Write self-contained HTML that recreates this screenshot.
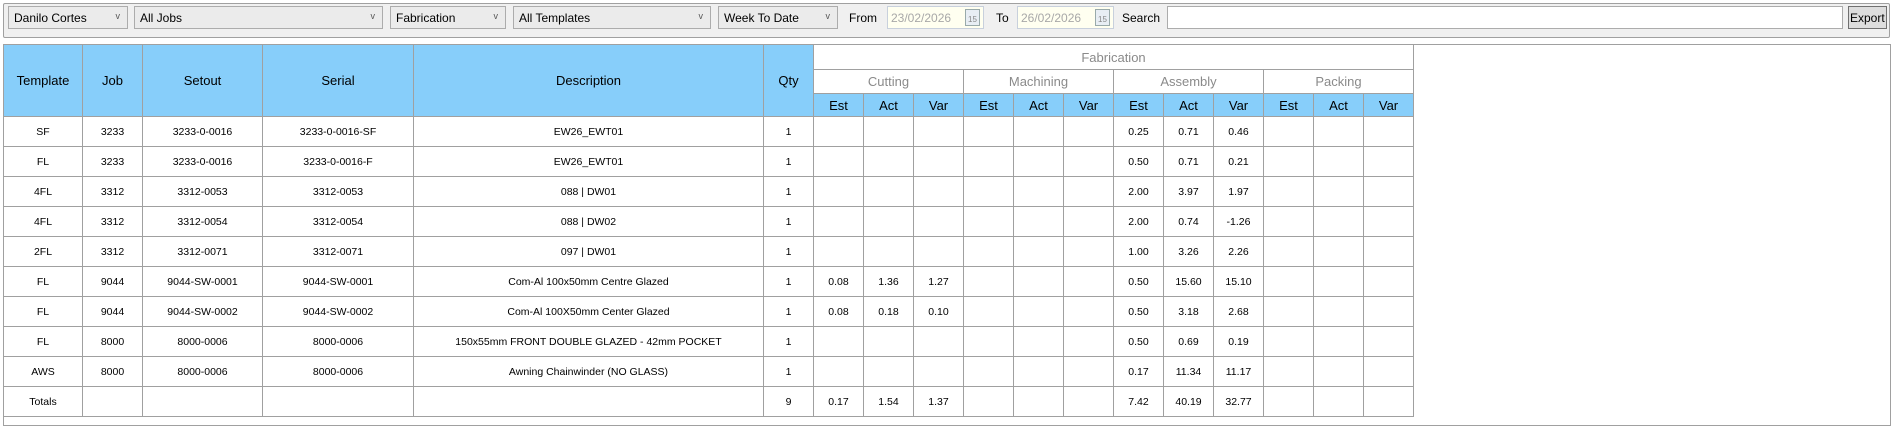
<!DOCTYPE html>
<html><head><meta charset="utf-8"><style>
*{box-sizing:border-box;margin:0;padding:0}
body{width:1892px;height:424px;background:#fff;font-family:"Liberation Sans",sans-serif;font-size:12px;color:#000;position:relative;overflow:hidden}
.tb{position:absolute;left:3px;top:3px;width:1887px;height:35px;background:#f0f0f0;border:1px solid #a0a0a0;border-radius:2px}
.c{position:absolute;top:6px;height:23px;border:1px solid #acacac;background:#ebebeb;padding:4px 5px;font-size:12px}
.c .ar{position:absolute;right:7px;top:4px;font-size:9px;color:#555}
.lb{position:absolute;top:11px;font-size:12px}
.dt{position:absolute;top:6px;height:23px;border:1px solid #c8d0dc;background:#fffff0;color:#a8a8a8;padding:4px 3px;font-size:12px}
.cal{position:absolute;right:3px;top:2px;width:15px;height:17px;border:1px solid #9aa;background:#e8eef4;font-size:8px;color:#888;text-align:center;padding-top:5px}
.frame{position:absolute;left:3px;top:44px;width:1888px;height:382px;border:1px solid #a0a0a0}
table{position:absolute;left:3px;top:44px;border-collapse:collapse;table-layout:fixed}
td{border:1px solid #a0a0a0;text-align:center;font-size:10.5px;overflow:hidden;white-space:nowrap}
.b{background:#87cefa;color:#000}
.g{color:#8a8a8a;font-size:13px}
.h{font-size:13px}
tr.d td{height:30px}
</style></head><body>
<div class="tb"></div>
<div class="c" style="left:8px;width:120px">Danilo Cortes<span class="ar">v</span></div>
<div class="c" style="left:134px;width:249px">All Jobs<span class="ar">v</span></div>
<div class="c" style="left:390px;width:116px">Fabrication<span class="ar">v</span></div>
<div class="c" style="left:513px;width:198px">All Templates<span class="ar">v</span></div>
<div class="c" style="left:718px;width:120px">Week To Date<span class="ar">v</span></div>
<div class="lb" style="left:849px">From</div>
<div class="dt" style="left:887px;width:97px">23/02/2026<div class="cal">15</div></div>
<div class="lb" style="left:996px">To</div>
<div class="dt" style="left:1017px;width:97px">26/02/2026<div class="cal">15</div></div>
<div class="lb" style="left:1122px">Search</div>
<div class="c" style="left:1167px;width:676px;background:#fff"></div>
<div class="c" style="left:1848px;width:39px;padding:4px 1px;background:#dddddd;border-color:#707070">Export</div>
<div class="frame"></div>
<table>
<colgroup><col style="width:79px"><col style="width:60px"><col style="width:120px"><col style="width:151px"><col style="width:350px"><col style="width:50px">
<col style="width:50px"><col style="width:50px"><col style="width:50px"><col style="width:50px"><col style="width:50px"><col style="width:50px"><col style="width:50px"><col style="width:50px"><col style="width:50px"><col style="width:50px"><col style="width:50px"><col style="width:50px"></colgroup>
<tr style="height:25px"><td rowspan="3" class="b h">Template</td><td rowspan="3" class="b h">Job</td><td rowspan="3" class="b h">Setout</td><td rowspan="3" class="b h">Serial</td><td rowspan="3" class="b h">Description</td><td rowspan="3" class="b h">Qty</td><td colspan="12" class="g">Fabrication</td></tr>
<tr style="height:24px"><td colspan="3" class="g">Cutting</td><td colspan="3" class="g">Machining</td><td colspan="3" class="g">Assembly</td><td colspan="3" class="g">Packing</td></tr>
<tr style="height:23px"><td class="b h">Est</td><td class="b h">Act</td><td class="b h">Var</td><td class="b h">Est</td><td class="b h">Act</td><td class="b h">Var</td><td class="b h">Est</td><td class="b h">Act</td><td class="b h">Var</td><td class="b h">Est</td><td class="b h">Act</td><td class="b h">Var</td></tr>
<tr class="d"><td>SF</td><td>3233</td><td>3233-0-0016</td><td>3233-0-0016-SF</td><td>EW26_EWT01</td><td>1</td><td></td><td></td><td></td><td></td><td></td><td></td><td>0.25</td><td>0.71</td><td>0.46</td><td></td><td></td><td></td></tr>
<tr class="d"><td>FL</td><td>3233</td><td>3233-0-0016</td><td>3233-0-0016-F</td><td>EW26_EWT01</td><td>1</td><td></td><td></td><td></td><td></td><td></td><td></td><td>0.50</td><td>0.71</td><td>0.21</td><td></td><td></td><td></td></tr>
<tr class="d"><td>4FL</td><td>3312</td><td>3312-0053</td><td>3312-0053</td><td>088 | DW01</td><td>1</td><td></td><td></td><td></td><td></td><td></td><td></td><td>2.00</td><td>3.97</td><td>1.97</td><td></td><td></td><td></td></tr>
<tr class="d"><td>4FL</td><td>3312</td><td>3312-0054</td><td>3312-0054</td><td>088 | DW02</td><td>1</td><td></td><td></td><td></td><td></td><td></td><td></td><td>2.00</td><td>0.74</td><td>-1.26</td><td></td><td></td><td></td></tr>
<tr class="d"><td>2FL</td><td>3312</td><td>3312-0071</td><td>3312-0071</td><td>097 | DW01</td><td>1</td><td></td><td></td><td></td><td></td><td></td><td></td><td>1.00</td><td>3.26</td><td>2.26</td><td></td><td></td><td></td></tr>
<tr class="d"><td>FL</td><td>9044</td><td>9044-SW-0001</td><td>9044-SW-0001</td><td>Com-Al 100x50mm Centre Glazed</td><td>1</td><td>0.08</td><td>1.36</td><td>1.27</td><td></td><td></td><td></td><td>0.50</td><td>15.60</td><td>15.10</td><td></td><td></td><td></td></tr>
<tr class="d"><td>FL</td><td>9044</td><td>9044-SW-0002</td><td>9044-SW-0002</td><td>Com-Al 100X50mm Center Glazed</td><td>1</td><td>0.08</td><td>0.18</td><td>0.10</td><td></td><td></td><td></td><td>0.50</td><td>3.18</td><td>2.68</td><td></td><td></td><td></td></tr>
<tr class="d"><td>FL</td><td>8000</td><td>8000-0006</td><td>8000-0006</td><td>150x55mm FRONT DOUBLE GLAZED - 42mm POCKET</td><td>1</td><td></td><td></td><td></td><td></td><td></td><td></td><td>0.50</td><td>0.69</td><td>0.19</td><td></td><td></td><td></td></tr>
<tr class="d"><td>AWS</td><td>8000</td><td>8000-0006</td><td>8000-0006</td><td>Awning Chainwinder (NO GLASS)</td><td>1</td><td></td><td></td><td></td><td></td><td></td><td></td><td>0.17</td><td>11.34</td><td>11.17</td><td></td><td></td><td></td></tr>
<tr class="d"><td>Totals</td><td></td><td></td><td></td><td></td><td>9</td><td>0.17</td><td>1.54</td><td>1.37</td><td></td><td></td><td></td><td>7.42</td><td>40.19</td><td>32.77</td><td></td><td></td><td></td></tr>
</table>
</body></html>
